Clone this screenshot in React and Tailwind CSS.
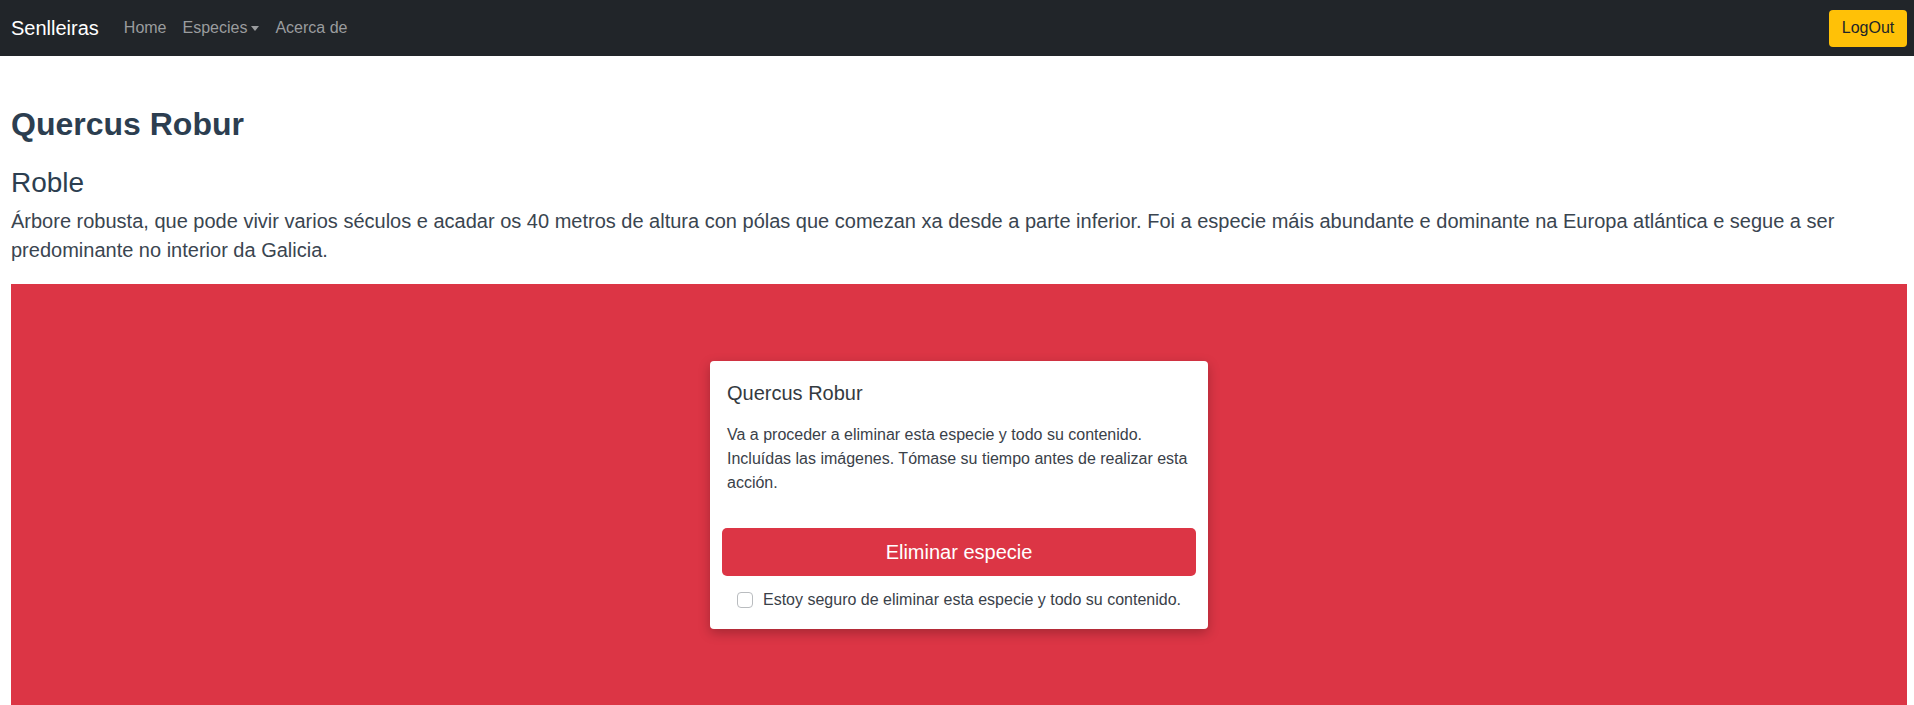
import { useState } from 'react'

function NavBar() {
  return (
    <nav className="h-[56px] bg-[#212529] flex items-center justify-between pl-[11px] pr-[7px]">
      <div className="flex items-center">
        <a href="#" className="text-[20px] text-white mr-[17px] leading-none">Senlleiras</a>
        <a href="#" className="text-[16px] text-[#9a9c9e] px-[8px]">Home</a>
        <a href="#" className="text-[16px] text-[#9a9c9e] px-[8px] flex items-center">
          Especies
          <span className="ml-[4px] inline-block w-0 h-0 border-l-[4px] border-r-[4px] border-t-[5px] border-l-transparent border-r-transparent border-t-[#9a9c9e]" />
        </a>
        <a href="#" className="text-[16px] text-[#9a9c9e] px-[8px]">Acerca de</a>
      </div>
      <button className="h-[37px] w-[78px] bg-[#ffc107] text-[#212529] text-[16px] rounded-[4px]">LogOut</button>
    </nav>
  )
}

function DeleteCard() {
  const [sure, setSure] = useState(false)
  return (
    <div className="w-[498px] bg-white rounded-[4px] shadow-[0_4px_12px_rgba(0,0,0,0.25)] px-[12px] pt-[20px] pb-[17px]">
      <h5 className="px-[5px] text-[20px] leading-[24px] text-[#343a40]">Quercus Robur</h5>
      <p className="px-[5px] mt-[18px] text-[16px] leading-[24px] text-[#3a4149]">
        Va a proceder a eliminar esta especie y todo su contenido. Incluídas las imágenes. Tómase su tiempo antes de realizar esta acción.
      </p>
      <button className="mt-[33px] w-full h-[48px] rounded-[5px] bg-[#dc3545] text-white text-[20px]">Eliminar especie</button>
      <label className="mt-[12px] flex items-center justify-center gap-[10px] text-[16px] text-[#3a4149] leading-[24px]">
        <input
          type="checkbox"
          checked={sure}
          onChange={e => setSure(e.target.checked)}
          className="appearance-none w-[16px] h-[16px] rounded-[4px] border border-[#b9bcbf] bg-white"
        />
        Estoy seguro de eliminar esta especie y todo su contenido.
      </label>
    </div>
  )
}

export default function App() {
  return (
    <div className="min-h-screen bg-white font-['Liberation_Sans',Arial,sans-serif]">
      <NavBar />
      <main className="pl-[11px] pr-[7px]">
        <h1 className="mt-[49px] text-[32px] leading-[38px] font-bold text-[#2c3e50]">Quercus Robur</h1>
        <h3 className="mt-[23px] text-[28px] leading-[34px] text-[#2c3e50]">Roble</h3>
        <p className="mt-[7px] text-[20px] leading-[29px] text-[#3a4550]">
          Árbore robusta, que pode vivir varios séculos e acadar os 40 metros de altura con pólas que comezan xa desde a parte inferior. Foi a especie máis abundante e dominante na Europa atlántica e segue a ser predominante no interior da Galicia.
        </p>
        <section className="mt-[19px] bg-[#dc3545] flex justify-center pt-[77px] pb-[80px]">
          <DeleteCard />
        </section>
      </main>
    </div>
  )
}
